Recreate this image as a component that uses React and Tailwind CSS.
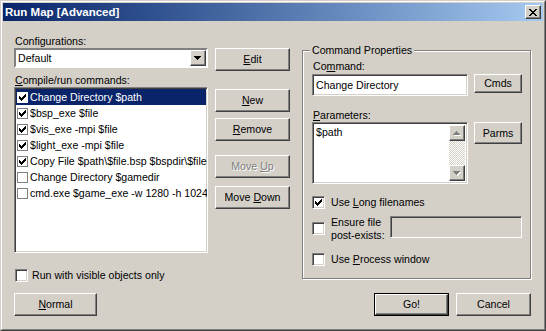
import React from 'react';

// classic 7x7 check glyph
const CHECK = [
  [6, 0], [5, 1], [6, 1], [0, 2], [4, 2], [5, 2], [6, 2],
  [0, 3], [1, 3], [3, 3], [4, 3], [5, 3], [0, 4], [1, 4], [2, 4], [3, 4], [4, 4],
  [1, 5], [2, 5], [3, 5], [2, 6],
];

const CLOSE_X = [
  [0, 0], [1, 0], [6, 0], [7, 0], [1, 1], [2, 1], [5, 1], [6, 1],
  [2, 2], [3, 2], [4, 2], [5, 2], [3, 3], [4, 3], [2, 4], [3, 4], [4, 4], [5, 4],
  [1, 5], [2, 5], [5, 5], [6, 5], [0, 6], [1, 6], [6, 6], [7, 6],
];

const Pixels = ({ pts, w, h, color = '#000' }) => (
  <svg width={w} height={h} viewBox={`0 0 ${w} ${h}`} shapeRendering="crispEdges">
    {pts.map(([x, y]) => (
      <rect key={`${x}-${y}`} x={x} y={y} width="1" height="1" fill={color} />
    ))}
  </svg>
);

const Arrow = ({ up, disabled }) => (
  <svg width="8" height="5" viewBox="0 0 8 5" shapeRendering="crispEdges">
    {disabled && (
      <path d={up ? 'M4 1h1v1h1v1h1v1h1v1H1V4h1V3h1V2h1z' : 'M1 1h7v1h-1v1h-1v1h-1v1h-1V4h-1V3h-1V2H1z'} fill="#fff" />
    )}
    <path
      d={up ? 'M3 0h1v1h1v1h1v1h1v1H0V3h1V2h1V1h1z' : 'M0 0h7v1h-1v1h-1v1h-1v1H3V3H2V2H1V1H0z'}
      fill={disabled ? '#808080' : '#000'}
    />
  </svg>
);

const Raised = ({ className = '', children }) => (
  <div
    className={`flex items-center justify-center bg-[#d4d0c8] border border-t-white border-l-white border-r-[#404040] border-b-[#404040] shadow-[inset_-1px_-1px_0_#808080] ${className}`}
  >
    {children}
  </div>
);

const Button = ({ children, className = '', disabled, isDefault }) => {
  if (isDefault) {
    return (
      <div className={`border border-black ${className}`}>
        <Raised className="h-full w-full">{children}</Raised>
      </div>
    );
  }
  return (
    <Raised
      className={`${className} ${disabled ? 'text-[#808080] [text-shadow:1px_1px_0_#fff]' : ''}`}
    >
      {children}
    </Raised>
  );
};

const Sunken = ({ className = '', children }) => (
  <div
    className={`bg-white border border-t-[#808080] border-l-[#808080] border-r-white border-b-white shadow-[inset_1px_1px_0_#404040,inset_-1px_-1px_0_#d4d0c8] ${className}`}
  >
    {children}
  </div>
);

const CheckBox = ({ checked }) => (
  <Sunken className="w-[13px] h-[13px] shrink-0 flex items-center justify-center">
    {checked && <Pixels pts={CHECK} w={7} h={7} />}
  </Sunken>
);

const U = ({ children }) => <span className="underline underline-offset-[1px]">{children}</span>;

const commands = [
  { text: 'Change Directory $path', on: true },
  { text: '$bsp_exe $file', on: true },
  { text: '$vis_exe -mpi $file', on: true },
  { text: '$light_exe -mpi $file', on: true },
  { text: 'Copy File $path\\$file.bsp $bspdir\\$file.bsp', on: true },
  { text: 'Change Directory $gamedir', on: false },
  { text: 'cmd.exe $game_exe -w 1280 -h 1024 -dev -console +map $file', on: false },
];

const TitleBar = () => (
  <div className="flex h-[18px] items-center bg-linear-to-r from-[#0a246a] to-[#a6caf0] pl-[2px] pr-[2px]">
    <span className="text-[11.5px] font-bold text-white">Run Map [Advanced]</span>
    <Raised className="ml-auto w-[16px] h-[14px]">
      <Pixels pts={CLOSE_X} w={8} h={7} />
    </Raised>
  </div>
);

export default function App() {
  return (
    <div className="w-[546px] h-[331px] overflow-hidden bg-[#d4d0c8] border border-t-[#d4d0c8] border-l-[#d4d0c8] border-r-[#404040] border-b-[#404040] font-[family-name:'Liberation_Sans',Arial,sans-serif] text-[10.6px] leading-[13px] text-black">
      <div className="flex h-full flex-col border border-t-white border-l-white border-r-[#808080] border-b-[#808080] p-px">
        <TitleBar />

        <div className="flex flex-col pl-[11px] pr-[12px] pt-[14px]">
          <div className="flex h-[247px] items-start">
            {/* left column */}
            <div className="flex w-[194px] flex-col">
              <div className="h-[13px] pl-px">Configurations:</div>
              <Sunken className="flex h-[20px] items-center border-2 pl-[2px] shadow-none border-t-[#808080] border-l-[#808080] border-r-white border-b-white">
                <span>Default</span>
                <Raised className="ml-auto h-[16px] w-[16px]">
                  <Arrow />
                </Raised>
              </Sunken>
              <div className="mt-[6px] h-[13px] pl-px">
                <U>C</U>ompile/run commands:
              </div>
              <Sunken className="h-[166px] overflow-hidden p-px">
                {commands.map((c, i) => (
                  <div
                    key={c.text}
                    className={`flex h-[16px] items-center whitespace-nowrap pl-px ${
                      i === 0 ? 'bg-[#0a246a] text-white' : ''
                    }`}
                  >
                    <div
                      className={`flex h-[11px] w-[11px] shrink-0 items-center justify-center border bg-white ${
                        i === 0 ? 'border-white' : 'border-[#808080]'
                      }`}
                    >
                      {c.on && <Pixels pts={CHECK} w={7} h={7} />}
                    </div>
                    <span className="ml-[2px]">{c.text}</span>
                  </div>
                ))}
              </Sunken>
              <div className="mt-[16px] flex items-center pl-px">
                <CheckBox />
                <span className="ml-[4px]">Run with visible objects only</span>
              </div>
            </div>

            {/* buttons column */}
            <div className="ml-[7px] flex w-[75px] flex-col">
              <Button className="mt-[13px] h-[23px]">
                <span><U>E</U>dit</span>
              </Button>
              <Button className="mt-[18px] h-[23px]">
                <span><U>N</U>ew</span>
              </Button>
              <Button className="mt-[6px] h-[23px]">
                <span><U>R</U>emove</span>
              </Button>
              <Button className="mt-[14px] h-[23px]" disabled>
                <span>Move <U>U</U>p</span>
              </Button>
              <Button className="mt-[8px] h-[23px]">
                <span>Move <U>D</U>own</span>
              </Button>
            </div>

            {/* command properties group */}
            <div className="relative ml-[12px] mt-[15px] flex h-[229px] w-[229px] flex-col border border-[#808080] pl-[9px] pt-[9px] shadow-[inset_1px_1px_0_#fff,1px_1px_0_#fff]">
              <span className="absolute left-[7px] top-[-7px] bg-[#d4d0c8] px-[2px]">Command Properties</span>
              <div className="h-[13px] pl-px">
                Co<U>m</U>mand:
              </div>
              <div className="mt-px flex items-start">
                <Sunken className="flex h-[22px] w-[156px] items-center pl-[3px]">Change Directory</Sunken>
                <Button className="ml-[6px] h-[19px] w-[48px]">Cmds</Button>
              </div>
              <div className="mt-[13px] h-[13px] pl-px">
                <U>P</U>arameters:
              </div>
              <div className="flex items-start">
                <Sunken className="flex h-[62px] w-[156px] p-[2px]">
                  <span className="flex-1 pl-px pt-px">$path</span>
                  <div className="flex w-[16px] flex-col bg-[repeating-conic-gradient(#d4d0c8_0%_25%,#ffffff_0%_50%)] bg-size-[2px_2px]">
                    <Raised className="h-[16px] w-[16px]">
                      <Arrow up disabled />
                    </Raised>
                    <Raised className="mt-auto h-[16px] w-[16px]">
                      <Arrow disabled />
                    </Raised>
                  </div>
                </Sunken>
                <Button className="ml-[6px] h-[22px] w-[48px]">Parms</Button>
              </div>
              <div className="mt-[12px] flex items-center">
                <CheckBox checked />
                <span className="ml-[6px]">
                  Use <U>L</U>ong filenames
                </span>
              </div>
              <div className="mt-[7px] flex h-[26px] items-start">
                <div className="mt-[6px]">
                  <CheckBox />
                </div>
                <div className="ml-[6px] w-[59px]">
                  Ensure file
                  <br />
                  post-exists:
                </div>
                <div className="h-[22px] w-[132px] border border-t-[#808080] border-l-[#808080] border-r-white border-b-white shadow-[inset_1px_1px_0_#404040,inset_-1px_-1px_0_#d4d0c8]" />
              </div>
              <div className="mt-[11px] flex items-center">
                <CheckBox />
                <span className="ml-[6px]">
                  Use <U>P</U>rocess window
                </span>
              </div>
            </div>
          </div>

          {/* bottom buttons */}
          <div className="mt-[11px] flex">
            <Button className="h-[23px] w-[83px]">
              <span><U>N</U>ormal</span>
            </Button>
            <Button className="ml-auto h-[23px] w-[75px]" isDefault>
              Go!
            </Button>
            <Button className="ml-[7px] h-[23px] w-[75px]">Cancel</Button>
          </div>
        </div>
      </div>
    </div>
  );
}
